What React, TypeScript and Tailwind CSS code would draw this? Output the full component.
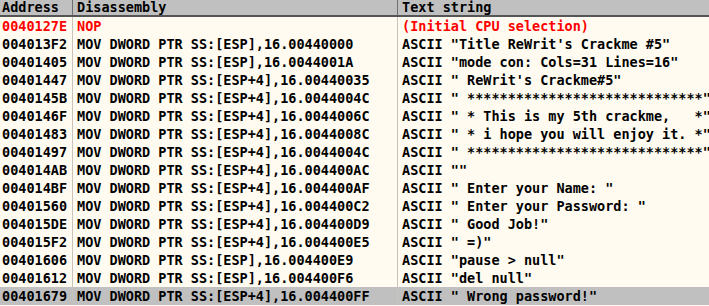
import { ReactElement } from "react";

interface Row {
    addr: string;
    dis: string;
    text: string;
    red?: boolean;
    selected?: boolean;
}

const rows: Row[] = [
    { addr: "0040127E", dis: "NOP", text: "(Initial CPU selection)", red: true },
    { addr: "004013F2", dis: "MOV DWORD PTR SS:[ESP],16.00440000", text: "ASCII \"Title ReWrit's Crackme #5\"" },
    { addr: "00401405", dis: "MOV DWORD PTR SS:[ESP],16.0044001A", text: "ASCII \"mode con: Cols=31 Lines=16\"" },
    { addr: "00401447", dis: "MOV DWORD PTR SS:[ESP+4],16.00440035", text: "ASCII \" ReWrit's Crackme#5\"" },
    { addr: "0040145B", dis: "MOV DWORD PTR SS:[ESP+4],16.0044004C", text: "ASCII \" *****************************\"" },
    { addr: "0040146F", dis: "MOV DWORD PTR SS:[ESP+4],16.0044006C", text: "ASCII \" * This is my 5th crackme,   *\"" },
    { addr: "00401483", dis: "MOV DWORD PTR SS:[ESP+4],16.0044008C", text: "ASCII \" * i hope you will enjoy it. *\"" },
    { addr: "00401497", dis: "MOV DWORD PTR SS:[ESP+4],16.0044004C", text: "ASCII \" *****************************\"" },
    { addr: "004014AB", dis: "MOV DWORD PTR SS:[ESP+4],16.004400AC", text: "ASCII \"\"" },
    { addr: "004014BF", dis: "MOV DWORD PTR SS:[ESP+4],16.004400AF", text: "ASCII \" Enter your Name: \"" },
    { addr: "00401560", dis: "MOV DWORD PTR SS:[ESP+4],16.004400C2", text: "ASCII \" Enter your Password: \"" },
    { addr: "004015DE", dis: "MOV DWORD PTR SS:[ESP+4],16.004400D9", text: "ASCII \" Good Job!\"" },
    { addr: "004015F2", dis: "MOV DWORD PTR SS:[ESP+4],16.004400E5", text: "ASCII \" =)\"" },
    { addr: "00401606", dis: "MOV DWORD PTR SS:[ESP],16.004400E9", text: "ASCII \"pause > null\"" },
    { addr: "00401612", dis: "MOV DWORD PTR SS:[ESP],16.004400F6", text: "ASCII \"del null\"" },
    { addr: "00401679", dis: "MOV DWORD PTR SS:[ESP+4],16.004400FF", text: "ASCII \" Wrong password!\"", selected: true },
];

const App = (): ReactElement => {
    return (
        <div className="w-[709px] h-[306px] overflow-hidden bg-[#fffbf0] font-['DejaVu_Sans_Mono',monospace] font-bold text-[13.5px] leading-[18px] text-black">
            {/* header */}
            <div className="grid grid-cols-[73px_325px_1fr] h-[17px] bg-[#c0c0c0] border-b-2 border-[#555555] leading-[15px]">
                <div className="pl-[2px] border-r border-[#6e6e6e] whitespace-pre">Address</div>
                <div className="pl-[4px] border-r border-[#6e6e6e] whitespace-pre">Disassembly</div>
                <div className="pl-[4px] whitespace-pre">Text string</div>
            </div>

            {rows.map((row) => (
                <div
                    key={row.addr}
                    className={`grid grid-cols-[73px_325px_1fr] h-[18px] ${row.selected ? "bg-[#c0c0c0]" : ""} ${row.red ? "text-[#ff0000]" : ""}`}
                >
                    <div className="pl-[2px] border-r border-[#c8c4bc] whitespace-pre">{row.addr}</div>
                    <div className="pl-[4px] border-r border-[#c8c4bc] whitespace-pre">{row.dis}</div>
                    <div className="pl-[4px] whitespace-pre">{row.text}</div>
                </div>
            ))}
        </div>
    );
};

export default App;
